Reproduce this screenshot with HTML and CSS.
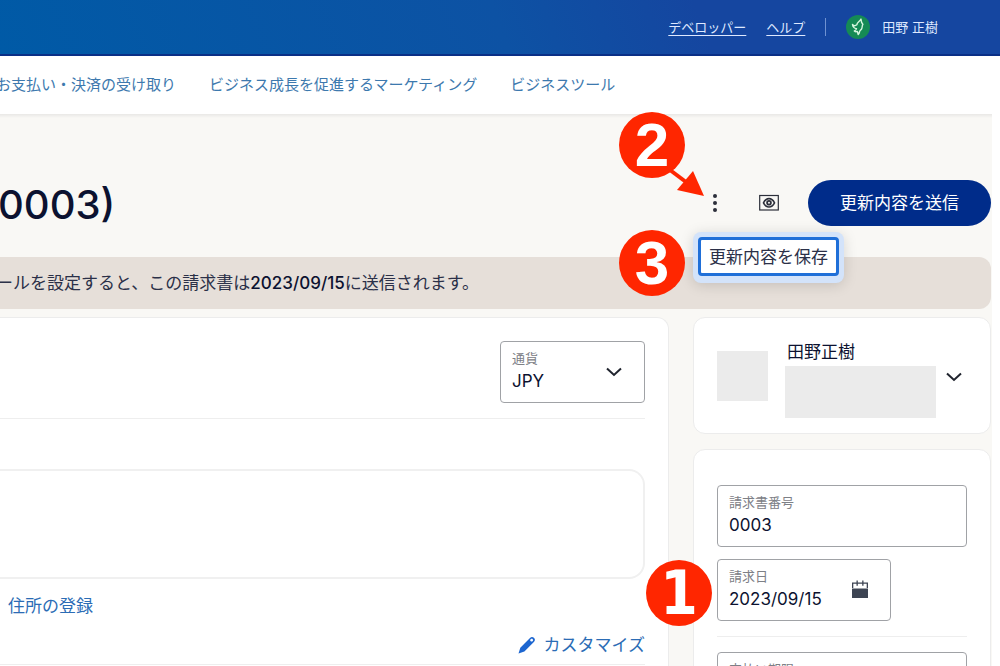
FILE: index.html
```html
<!DOCTYPE html>
<html lang="ja">
<head>
<meta charset="utf-8">
<title>請求書の編集</title>
<link rel="stylesheet" href="styles.css">
</head>
<body>
<header class="topbar">
  <a class="top-link" href="#">デベロッパー</a>
  <a class="top-link" href="#">ヘルプ</a>
  <span class="top-divider"></span>
  <button class="account" type="button">
    <svg class="avatar" viewBox="0 0 24 24" aria-hidden="true">
      <circle cx="12" cy="12" r="12" fill="#158a55"/>
      <path d="M6.500 9.500c1.300 1.500 3 1.300 4.300.3.300-2.600 2.700-2.900 4.200-5.800.2 2.200 0 3.600 1.900 5.200-1 1.300-.4 3-1.300 4.600-.7 1.300-1.900 1.800-2.100 3.200-.2 1-.6 1.700-1.300 2.500l-.9-3.100c-1.200.5-2.200.3-3-.5 1.300-.4 1.900-1.200 2.200-2.300-2.300-.2-3.700-1.900-4-4.100z" fill="none" stroke="#d6f7de" stroke-width="1.400" stroke-linejoin="round"/>
    </svg>
    <span>田野 正樹</span>
  </button>
</header>
<nav class="mainnav">
  <a href="#">お支払い・決済の受け取り</a>
  <a href="#">ビジネス成長を促進するマーケティング</a>
  <a href="#">ビジネスツール</a>
</nav>
<main class="page">
  <div class="heading">
    <h1>0003)</h1>
    <div class="actions">
      <div class="more">
        <button class="icon-btn" type="button" aria-label="その他">
          <svg width="24" height="24" viewBox="0 0 24 24"><g fill="#2c2f3a"><circle cx="12" cy="5" r="2"/><circle cx="12" cy="12" r="2"/><circle cx="12" cy="19" r="2"/></g></svg>
        </button>
        <div class="menu"><button class="menu-item" type="button">更新内容を保存</button></div>
        <span class="step step-two">2</span>
        <svg class="arrow" viewBox="0 0 38 30" aria-hidden="true"><path d="M3 3L19 15" stroke="#ff2600" stroke-width="4"/><path d="M37 29L26 4 10 23z" fill="#ff2600"/></svg>
        <span class="step step-three">3</span>
      </div>
      <button class="icon-btn" type="button" aria-label="プレビュー">
        <svg width="24" height="24" viewBox="0 0 24 24" fill="none" stroke="#2c2f3a"><rect x="2.700" y="4.500" width="18.600" height="14.500" stroke-width="1.200"/><path d="M6.500 11.800c2.800-5.600 8.200-5.600 11 0-2.800 5.600-8.200 5.600-11 0z" stroke-width="1.600"/><circle cx="12" cy="11.800" r="1.900" stroke-width="1.800"/></svg>
      </button>
      <button class="send" type="button">更新内容を送信</button>
    </div>
  </div>
  <p class="notice"><span>ールを設定すると、この請求書は<strong>2023/09/15</strong>に送信されます。</span></p>
  <div class="columns">
    <section class="card invoice">
      <div class="currency-row">
        <div class="field currency">
          <label for="currency">通貨</label>
          <select id="currency"><option>JPY</option></select>
          <svg class="chevron" viewBox="0 0 16 10" aria-hidden="true"><path d="M1 1.500l7 6.500 7-6.500"/></svg>
        </div>
      </div>
      <div class="sender"></div>
      <a class="link address" href="#">住所の登録</a>
      <a class="link customize" href="#">
        <svg width="20" height="20" viewBox="0 0 20 20" aria-hidden="true"><path fill="#1d66d0" fill-rule="evenodd" d="M1.500 18.500l1.800-5.800L13 2.900c1.200-1.200 2.700-1.300 3.900-.1 1.400 1.300 1.300 2.900.2 4L7.400 16.600zM13.700 4.200c-.8.800-.6 1.400 0 2 .7.6 1.300.5 2-.2.6-.7.500-1.300 0-1.800-.6-.6-1.300-.6-2 0z"/></svg>
        カスタマイズ
      </a>
      <hr>
    </section>
    <aside class="side">
      <section class="card customer">
        <span class="thumb"></span>
        <div class="person">
          <span class="person-name">田野正樹</span>
          <span class="mask"></span>
        </div>
        <button class="expand" type="button" aria-label="開く"><svg class="chevron" viewBox="0 0 16 10"><path d="M1 1.500l7 6.500 7-6.500"/></svg></button>
      </section>
      <section class="card details">
        <div class="field">
          <label for="number">請求書番号</label>
          <input id="number" type="text" value="0003">
        </div>
        <div class="field date">
          <label for="date">請求日</label>
          <input id="date" type="text" value="2023/09/15">
          <svg class="calendar" viewBox="0 0 18 18" aria-hidden="true"><g fill="#3d4453"><path d="M1 8.500h16V18H1z"/><path d="M1 2.500h3.500v1.300H2.300V8H1zM13.500 2.500H17V8h-1.300V3.800h-2.200zM4 2.500h10v1.300H4z"/><path d="M5.500.5h1.300v5.300H5.500zM11.200.5h1.300v5.300h-1.300z"/></g></svg>
          <span class="step step-one">1</span>
        </div>
        <hr>
        <div class="field">
          <label for="due">支払い期限</label>
          <select id="due"><option></option></select>
        </div>
      </section>
    </aside>
  </div>
</main>
</body>
</html>
```

FILE: styles.css
```css
* {
  box-sizing: border-box;
}

body {
  display: flex;
  flex-direction: column;
  height: 100vh;
  margin: 0;
  overflow: hidden;
  background: #fff;
  color: #0c1230;
  font-family: Inter, "Noto Sans CJK JP", sans-serif;
  font-size: 17px;
  line-height: 24px;
}

button,
input,
select {
  padding: 0;
  border: 0;
  background: none;
  color: inherit;
  font: inherit;
}

hr {
  width: 100%;
  margin: 0;
  border: 0;
  border-top: 1px solid #eee;
}

.topbar {
  display: flex;
  flex: none;
  align-items: center;
  justify-content: flex-end;
  gap: 20px;
  height: 56px;
  padding-right: 62px;
  border-bottom: 2px solid #0a2f86;
  background: linear-gradient(70deg, #005aa6, #0d52a4 50%, #1546a0 70%);
  color: #dfe9ff;
  font-size: 13px;
  line-height: 20px;
}

.top-link {
  color: inherit;
  text-underline-offset: 3px;
}

.top-divider {
  width: 1px;
  height: 18px;
  background: #6f92d2;
}

.account {
  display: flex;
  align-items: center;
  gap: 12px;
}

.avatar {
  width: 24px;
  height: 24px;
}

.mainnav {
  display: flex;
  flex: none;
  align-items: center;
  gap: 33px;
  height: 58px;
  margin-left: -4px;
  font-size: 15px;
  white-space: nowrap;
}

.mainnav a {
  color: #3d79ae;
  text-decoration: none;
}

.page {
  display: flex;
  flex: 1 0 auto;
  flex-direction: column;
  margin-right: 8px;
  padding-top: 66px;
  padding-right: 1px;
  background: #f9f8f5 linear-gradient(#e9e8e6, #f9f8f5) no-repeat 0 0 / 100% 4px;
}

.heading {
  display: flex;
  align-items: center;
  justify-content: space-between;
  height: 46px;
}

h1 {
  margin: 4px 0 0 -2px;
  font-size: 40px;
  font-weight: 500;
  line-height: 46px;
}

.actions {
  display: flex;
  align-items: center;
  gap: 30px;
}

.more {
  position: relative;
  display: flex;
}

.icon-btn {
  display: flex;
}

.send {
  height: 46px;
  margin-left: -3px;
  padding: 0 32px;
  border-radius: 23px;
  background: #002c8a;
  color: #fff;
}

.menu {
  position: absolute;
  z-index: 2;
  top: 41px;
  left: -10px;
  padding: 5px 5px 7px;
  border-radius: 8px;
  background: #d3e3fa;
  box-shadow: 0 2px 14px #00000026;
}

.menu-item {
  height: 39px;
  padding: 0 8px;
  border: 3px solid #1f6fd8;
  border-radius: 4px;
  background: #fff;
  color: #2b3048;
  white-space: nowrap;
}

.step {
  position: absolute;
  z-index: 3;
  width: 66px;
  height: 66px;
  border-radius: 50%;
  background: #ff2600;
  color: #fff;
  font: bold 62px/66px "Liberation Sans", sans-serif;
  text-align: center;
}

.step-one {
  top: 0;
  left: -72px;
  font: bold 60px/66px "DejaVu Sans Condensed", "DejaVu Sans", sans-serif;
}

.step-two {
  top: -79px;
  left: -84px;
}

.step-three {
  top: 39px;
  left: -84px;
}

.arrow {
  position: absolute;
  z-index: 3;
  top: -24px;
  left: -36px;
  width: 38px;
  height: 30px;
}

.notice {
  flex: none;
  height: 52px;
  margin: 31px 0 8px;
  overflow: hidden;
  border-radius: 0 12px 12px 0;
  background: #e6dfd9;
  color: #2b3048;
  line-height: 52px;
  white-space: nowrap;
}

.notice span {
  margin-left: -4px;
}

.notice strong {
  color: #0c1230;
  font-weight: 500;
}

.columns {
  display: flex;
  flex: 1;
  gap: 24px;
}

.card {
  border: 1px solid #ececec;
  border-radius: 12px;
  background: #fff;
}

.invoice {
  display: flex;
  flex: 1;
  flex-direction: column;
  align-items: flex-start;
  padding: 23px 23px 0 0;
  border-width: 1px 1px 0 0;
  border-radius: 0 12px 0 0;
}

.currency-row {
  display: flex;
  justify-content: flex-end;
  width: 100%;
  padding-bottom: 15px;
  border-bottom: 1px solid #eee;
}

.field {
  position: relative;
  display: flex;
  flex-direction: column;
  height: 62px;
  padding: 6px 11px;
  border: 1px solid #a0a2a6;
  border-radius: 4px;
  background: #fff;
}

.field label {
  color: #7d8086;
  font-size: 13px;
  line-height: 20px;
}

.field input,
.field select {
  width: 100%;
  height: 26px;
  appearance: none;
}

.currency {
  width: 145px;
}

.chevron {
  width: 16px;
  height: 10px;
  fill: none;
  stroke: #20242e;
  stroke-width: 2;
}

.currency .chevron {
  position: absolute;
  top: 25px;
  right: 22px;
}

.sender {
  width: 100%;
  height: 110px;
  margin: 50px 0 15px;
  border: 2px solid #f0f0f0;
  border-left: 0;
  border-radius: 0 16px 16px 0;
}

.link {
  color: #2b6cb5;
  text-decoration: none;
}

.address {
  margin-left: 8px;
}

.customize {
  display: flex;
  align-items: center;
  align-self: flex-end;
  gap: 7px;
  margin: 15px 0 7px;
}

.side {
  display: flex;
  flex-direction: column;
  gap: 15px;
  width: 298px;
}

.customer {
  display: flex;
  padding: 22px 28px 15px 23px;
}

.thumb {
  width: 51px;
  height: 50px;
  margin: 11px 17px 0 0;
  background: #ebebeb;
}

.person {
  display: flex;
  flex: 1;
  flex-direction: column;
  gap: 2px;
}

.person-name {
  padding-left: 2px;
}

.mask {
  height: 52px;
  background: #ebebeb;
}

.expand {
  display: flex;
  align-items: center;
  margin-left: 10px;
  padding-bottom: 5px;
}

.details {
  display: flex;
  flex: 1;
  flex-direction: column;
  gap: 12px;
  padding: 35px 23px 0;
}

.details hr {
  margin: 3px 0;
}

.date {
  width: 174px;
}

.calendar {
  position: absolute;
  top: 20px;
  right: 21px;
  width: 18px;
  height: 18px;
}
```
